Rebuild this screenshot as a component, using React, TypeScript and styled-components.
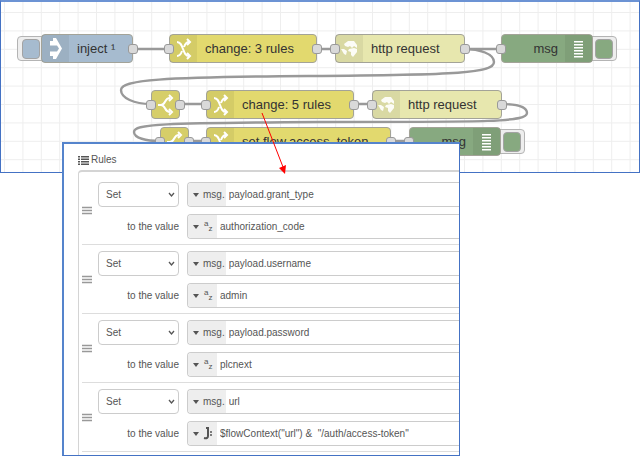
import React from 'react';
import styled, { createGlobalStyle } from 'styled-components';

const GlobalStyle = createGlobalStyle`
  * { box-sizing: border-box; }
  body {
    margin: 0;
    background: #fff;
    font-family: "Liberation Sans", Arial, sans-serif;
  }
  button, input, select { font: inherit; color: inherit; margin: 0; }
`;

const Page = styled.main`
  position: relative;
  overflow: hidden;
`;

const Canvas = styled.section`
  position: relative;
  height: 173px;
  border: 1px solid #4472c4;
  border-top-width: 2px;
  border-top-color: #6c93d4;
  overflow: hidden;
`;

const Drawing = styled.svg`
  position: absolute;
  top: -2px;
  left: -1px;
`;

const Node = styled.div<{ $x: number; $y: number; $w: number; $color: string; $end?: boolean }>`
  position: absolute;
  left: ${p => p.$x - 1}px;
  top: ${p => p.$y - 2}px;
  width: ${p => p.$w}px;
  height: 29px;
  display: flex;
  flex-direction: ${p => (p.$end ? 'row-reverse' : 'row')};
  align-items: stretch;
  border: 1px solid #a3a398;
  border-radius: 4px;
  background: ${p => p.$color};
`;

const NodeIcon = styled.span<{ $plain?: boolean }>`
  display: flex;
  width: 27px;
  flex: none;
  align-items: center;
  justify-content: center;
  background: ${p => (p.$plain ? 'transparent' : 'rgba(0, 0, 0, 0.06)')};
`;

const NodeLabel = styled.span<{ $end?: boolean }>`
  flex: 1;
  padding: ${p => (p.$end ? '0 7px 0 0' : '0 0 0 8px')};
  text-align: ${p => (p.$end ? 'right' : 'left')};
  font-size: 13px;
  line-height: 27px;
  color: #333;
  white-space: nowrap;
`;

const Port = styled.span<{ $out?: boolean }>`
  position: absolute;
  top: 9px;
  ${p => (p.$out ? 'right: -6px;' : 'left: -6px;')}
  width: 10px;
  height: 10px;
  border: 1px solid #999;
  border-radius: 3px;
  background: #d9d9d9;
`;

const NodeButton = styled.button<{ $x: number; $y: number; $color: string; $end?: boolean }>`
  position: absolute;
  left: ${p => p.$x - 1}px;
  top: ${p => p.$y - 2}px;
  width: 30px;
  height: 25px;
  display: flex;
  align-items: center;
  justify-content: ${p => (p.$end ? 'flex-end' : 'flex-start')};
  padding: 0 3px 0 4px;
  border: 1px solid #b4b4b4;
  border-radius: 4px;
  background: #eee;
  &::before {
    content: "";
    width: 16px;
    height: 18px;
    border: 1px solid #a3a3a3;
    border-radius: 4px;
    background: ${p => p.$color};
  }
`;

const Panel = styled.section`
  position: relative;
  margin: -31px 180px 0 62px;
  padding: 10px 0 0 14px;
  border: 1px solid #4472c4;
  border-top: 2px solid #5584cc;
  border-left: 2px solid #5584cc;
  background: #fff;
  color: #555;
  font-size: 10px;
  overflow: hidden;
`;

const Heading = styled.h2`
  display: flex;
  align-items: center;
  gap: 2px;
  margin: 0 0 4px;
  font-size: 10px;
  font-weight: 400;
  line-height: 12px;
`;

const Rules = styled.ol`
  list-style: none;
  margin: 0 -10px 0 0;
  padding: 4px 0 3px 3px;
  border: 1px solid #d4d4d4;
  border-width: 2px 0 0 1px;
  border-radius: 4px 0 0 0;
`;

const Rule = styled.li`
  display: grid;
  grid-template-columns: 11px 81px 1fr;
  grid-template-rows: 25px 25px;
  row-gap: 7px;
  align-items: center;
  padding: 6px 0 5px;
  border-bottom: 1px solid #ddd;
`;

const Handle = styled.svg`
  grid-row: 1 / 3;
`;

const SelectBox = styled.div`
  position: relative;
  margin-left: 5px;
  width: 81px;
  height: 25px;
  svg { position: absolute; right: 4px; top: 9px; pointer-events: none; }
`;

const Select = styled.select`
  appearance: none;
  width: 100%;
  height: 100%;
  padding: 0 7px;
  border: 1px solid #ccc;
  border-radius: 4px;
  background: #fff;
`;

const ValueLabel = styled.label`
  margin-right: -5px;
  text-align: right;
  line-height: 25px;
`;

const Typed = styled.div`
  display: flex;
  height: 25px;
  margin-left: 13px;
  border: 1px solid #ccc;
  border-right: 0;
  border-radius: 4px 0 0 4px;
  overflow: hidden;
`;

const TypeButton = styled.button`
  display: flex;
  flex: none;
  align-items: center;
  gap: 4px;
  padding: 0 1px 0 5px;
  border: 0;
  background: #eee;
`;

const TextInput = styled.input`
  flex: 1;
  min-width: 0;
  padding: 0 3px;
  border: 0;
  outline: 0;
  background: #fff;
`;

const ArrowOverlay = styled.svg`
  position: absolute;
  top: 0;
  left: 0;
  pointer-events: none;
`;

const YELLOW = '#e2d96e';
const OLIVE = '#d6ce69';
const PALE = '#e7e7ae';
const GREEN = '#87a980';
const BLUE = '#a6bbcf';

const InjectIcon = () => (
  <svg width="14" height="22" viewBox="0 0 14 22" fill="#fff">
    <path d="M1 3H4V0H7L13 10.500L7 21H4V18H1V13.500H8L10 10.500 8 7.500H1z" />
  </svg>
);

const ChangeIcon = () => (
  <svg width="16" height="22" viewBox="0 0 16 22" fill="none" stroke="#fff" strokeWidth="2">
    <path d="M1 4C8 4 6 18 13 18M1 18c3 0 4-2 5-5M8 9c1-3 2-5 5-5" />
    <path d="M11 1l3 3-3 3M11 15l3 3-3 3" />
  </svg>
);

const SwitchIcon = () => (
  <svg width="16" height="22" viewBox="0 0 16 22" fill="none" stroke="#fff" strokeWidth="2">
    <path d="M0 11h3C8 11 6 4 12 4M3 11c5 0 3 7 9 7" />
    <path d="M11 1l3 3-3 3M11 15l3 3-3 3" />
  </svg>
);

const GlobeIcon = () => (
  <svg width="18" height="18" viewBox="0 0 18 18" fill="#fff" fillOpacity="0.9">
    <path d="M3 4L7 1 13 1 16 5 16 8 13 6 11 8 9 6 7 7 4 6zM8 9L13 8 16 9 16 12 12 17 10 15 10 12 7 11zM0 9L3 9 6 11 5 15 3 14z" />
  </svg>
);

const DebugIcon = () => (
  <svg width="11" height="18" viewBox="0 0 11 18" fill="#fff">
    {[1, 4, 7, 10, 13, 16].map(y => <rect key={y} x="1" y={y} width="9" height="1.5" />)}
  </svg>
);

type Kind = 'inject' | 'change' | 'switch' | 'http' | 'debug';
const icons = { inject: InjectIcon, change: ChangeIcon, switch: SwitchIcon, http: GlobeIcon, debug: DebugIcon };
const colors = { inject: BLUE, change: YELLOW, switch: OLIVE, http: PALE, debug: GREEN };

const nodes: { kind: Kind; x: number; y: number; w: number; label?: string }[] = [
  { kind: 'inject', x: 41, y: 34, w: 92, label: 'inject ¹' },
  { kind: 'change', x: 169, y: 34, w: 148, label: 'change: 3 rules' },
  { kind: 'http', x: 335, y: 34, w: 130, label: 'http request' },
  { kind: 'debug', x: 501, y: 34, w: 92, label: 'msg' },
  { kind: 'switch', x: 151, y: 90, w: 29 },
  { kind: 'change', x: 206, y: 90, w: 148, label: 'change: 5 rules' },
  { kind: 'http', x: 372, y: 90, w: 130, label: 'http request' },
  { kind: 'switch', x: 160, y: 127, w: 29 },
  { kind: 'change', x: 206, y: 127, w: 185, label: 'set flow.access_token' },
  { kind: 'debug', x: 409, y: 127, w: 92, label: 'msg' },
];

const wires = [
  'M133 49H169M317 49H335M464 49H501M179 104H206M354 104H372M188 141H206M391 141H409',
  'M464 49C480 49 494 54 494 62C494 73 460 75 308 76C160 77 121 80 121 90C121 98 134 104 151 104',
  'M501 104C515 104 527 106 527 113C527 122 490 122 320 122C160 123 134 124 134 132C134 138 146 141 160 141',
];

const rules = [
  { target: 'payload.grant_type', type: 'az', value: 'authorization_code' },
  { target: 'payload.username', type: 'az', value: 'admin' },
  { target: 'payload.password', type: 'az', value: 'plcnext' },
  { target: 'url', type: 'expr', value: '$flowContext("url") &  "/auth/access-token"' },
];

const Caret = () => (
  <svg width="6" height="4" viewBox="0 0 6 4"><path d="M0 0h6L3 4z" fill="#555" /></svg>
);

const StringType = styled.span`
  display: flex;
  width: 13px;
  padding-left: 1px;
  font-size: 8px;
  line-height: 8px;
  sub { font-size: 8px; line-height: 8px; vertical-align: baseline; padding-top: 5px; }
`;

const ExprIcon = () => (
  <svg width="13" height="13" viewBox="0 0 13 13" fill="none" stroke="#555">
    <path d="M3 1h3M5 1v8q0 3-4 2" strokeWidth="2" />
    <path d="M7 5h2M7 8h2" strokeWidth="1.5" />
  </svg>
);

export default function App() {
  return (
    <>
      <GlobalStyle />
      <Page>
        <Canvas aria-label="Flow">
          <Drawing width="640" height="173" viewBox="0 0 640 173" fill="none">
            <g stroke="#eee">
              {Array.from({ length: 35 }, (_, i) => <path key={i} d={`M${4.5 + i * 18.4} 0V173`} />)}
              {Array.from({ length: 9 }, (_, i) => <path key={i} d={`M0 ${12.5 + i * 18.4}H640`} />)}
            </g>
            <g stroke="#999" strokeWidth="2.4">
              {wires.map(d => <path key={d} d={d} />)}
            </g>
          </Drawing>
          <NodeButton $x={17} $y={36} $color={BLUE} aria-label="Inject" />
          <NodeButton $x={587} $y={36} $color={GREEN} $end aria-label="Toggle debug" />
          <NodeButton $x={495} $y={129} $color={GREEN} $end aria-label="Toggle debug" />
          {nodes.map(n => {
            const Icon = icons[n.kind];
            const end = n.kind === 'debug';
            return (
              <Node key={`${n.x}-${n.y}`} $x={n.x} $y={n.y} $w={n.w} $color={colors[n.kind]} $end={end}>
                <NodeIcon $plain={n.kind === 'switch'}><Icon /></NodeIcon>
                {n.label && <NodeLabel $end={end}>{n.label}</NodeLabel>}
                {n.kind !== 'inject' && <Port />}
                {!end && <Port $out />}
              </Node>
            );
          })}
        </Canvas>
        <Panel>
          <Heading>
            <svg width="11" height="9" viewBox="0 0 11 9" fill="#555">
              {[0, 2.5, 5, 7.5].map(y => <path key={y} d={`M0 ${y}h2v1.5h-2zM3 ${y}h8v1.5h-8z`} />)}
            </svg>
            Rules
          </Heading>
          <Rules>
            {rules.map((r, i) => (
              <Rule key={r.target}>
                <Handle width="10" height="9" viewBox="0 0 10 9" stroke="#999" strokeWidth="1.4">
                  <path d="M0 1.5H10M0 4.5H10M0 7.5H10" />
                </Handle>
                <SelectBox>
                  <Select aria-label="Action" defaultValue="Set">
                    <option>Set</option>
                    <option>Change</option>
                    <option>Delete</option>
                    <option>Move</option>
                  </Select>
                  <svg width="7" height="7" viewBox="0 0 7 7" fill="none" stroke="#555" strokeWidth="1.3">
                    <path d="M1 2l2.500 3L6 2" />
                  </svg>
                </SelectBox>
                <Typed>
                  <TypeButton><Caret />msg.</TypeButton>
                  <TextInput aria-label="Property" defaultValue={r.target} />
                </Typed>
                <ValueLabel htmlFor={`value-${i}`}>to the value</ValueLabel>
                <Typed>
                  <TypeButton>
                    <Caret />
                    {r.type === 'az' ? <StringType>a<sub>z</sub></StringType> : <ExprIcon />}
                  </TypeButton>
                  <TextInput id={`value-${i}`} defaultValue={r.value} />
                </Typed>
              </Rule>
            ))}
          </Rules>
        </Panel>
        <ArrowOverlay width="300" height="180" viewBox="0 0 300 180">
          <path d="M262 113L283 167" stroke="#f00" />
          <path d="M279 168L286 165L285 174z" fill="#f00" />
        </ArrowOverlay>
      </Page>
    </>
  );
}
